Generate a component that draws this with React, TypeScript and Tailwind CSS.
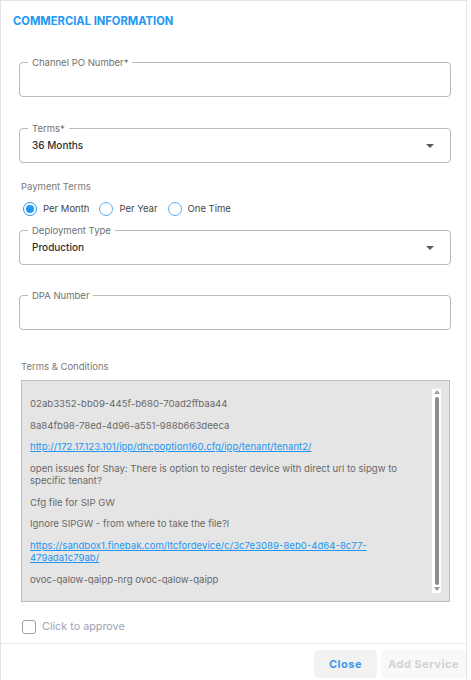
import React from "react";

function OutlinedField({ label, value, select }: { label: string; value?: string; select?: boolean }) {
  return (
    <div className="relative h-[35px] rounded-[4px] border border-[#b9b9b9] flex items-center pl-[12px] pr-[16px]">
      <span className="absolute -top-[7px] left-[8px] bg-white px-[4px] text-[9.5px] leading-[13px] text-[#707070]">
        {label}
      </span>
      {value && <span className="flex-1 text-[10px] font-medium text-[#2f2f2f]">{value}</span>}
      {select && (
        <svg width="8" height="4" viewBox="0 0 8 4" className="ml-auto">
          <path d="M0 0h8L4 4z" fill="#5a5a5a" />
        </svg>
      )}
    </div>
  );
}

function Radio({ label, checked }: { label: string; checked?: boolean }) {
  return (
    <label className="flex items-center gap-[6px]">
      <span
        className={
          checked
            ? "w-[14px] h-[14px] rounded-full border-[1.5px] border-[#2196f3] flex items-center justify-center"
            : "w-[14px] h-[14px] rounded-full border-[1.5px] border-[#5aaef5]"
        }
      >
        {checked && <span className="w-[8px] h-[8px] rounded-full bg-[#2196f3]" />}
      </span>
      <span className="text-[9.5px] text-[#454545]">{label}</span>
    </label>
  );
}

const notes: { text: string; link?: boolean }[] = [
  { text: "02ab3352-bb09-445f-b680-70ad2ffbaa44" },
  { text: "8a84fb98-78ed-4d96-a551-988b663deeca" },
  { text: "http://172.17.123.101/ipp/dhcpoption160.cfg/ipp/tenant/tenant2/", link: true },
  { text: "open issues for Shay: There is option to register device with direct url to sipgw to specific tenant?" },
  { text: "Cfg file for SIP GW" },
  { text: "Ignore SIPGW - from where to take the file?l" },
  { text: "https://sandbox1.finebak.com/ltcfordevice/c/3c7e3089-8eb0-4d64-8c77-479ada1c79ab/", link: true },
  { text: "ovoc-qalow-qaipp-nrg ovoc-qalow-qaipp" },
];

export default function App() {
  return (
    <div className="w-[471px] h-[680px] bg-white overflow-hidden font-['Inter',sans-serif]">
      <div className="w-[467px] h-full border-l border-t border-r border-[#e4e4e4] flex flex-col">
        <div className="pl-[12px] pt-[13px] text-[11.2px] font-bold text-[#2196f3] leading-[14px]">
          COMMERCIAL INFORMATION
        </div>

        <div className="pl-[18px] pr-[15px] pt-[34px] flex flex-col">
          <OutlinedField label="Channel PO Number*" />
          <div className="h-[31px]" />
          <OutlinedField label="Terms*" value="36 Months" select />

          <div className="pl-[2px] pt-[17px] text-[9.5px] leading-[13px] text-[#7a7a7a]">Payment Terms</div>
          <div className="pl-[4px] pt-[9px] flex items-center gap-[10px]">
            <Radio label="Per Month" checked />
            <Radio label="Per Year" />
            <Radio label="One Time" />
          </div>

          <div className="h-[14px]" />
          <OutlinedField label="Deployment Type" value="Production" select />
          <div className="h-[30px]" />
          <OutlinedField label="DPA Number" />

          <div className="pl-[2px] pt-[30px] text-[9.5px] leading-[13px] text-[#7a7a7a]">Terms &amp; Conditions</div>

          <div className="ml-[2px] mr-[1px] mt-[7px] h-[222px] bg-[#e5e5e5] border border-[#bdbdbd] flex">
            <div className="flex-1 pl-[8px] pr-[8px] pt-[17px] flex flex-col gap-[9px] text-[9.6px] leading-[12.5px] text-[#696969]">
              {notes.map((n, i) =>
                n.link ? (
                  <a key={i} className="text-[#2196f3] underline break-words">
                    {n.text}
                  </a>
                ) : (
                  <p key={i}>{n.text}</p>
                )
              )}
            </div>
            <div className="w-[9px] mr-[8px] my-[8px] bg-white flex flex-col items-center">
              <svg width="6" height="5" viewBox="0 0 6 5" className="mt-[1px]">
                <path d="M0 4h6L3 0z" fill="#9a9a9a" />
              </svg>
              <div className="flex-1 w-[4px] my-[2px] rounded-full bg-[#8c8c8c]" />
              <svg width="6" height="5" viewBox="0 0 6 5" className="mb-[1px]">
                <path d="M0 0h6L3 4z" fill="#9a9a9a" />
              </svg>
            </div>
          </div>

          <label className="pl-[3px] pt-[17px] flex items-center gap-[6px]">
            <span className="w-[14px] h-[14px] rounded-[3px] border-[1.5px] border-[#a3a3a3]" />
            <span className="text-[10.8px] text-[#a19fb5]">Click to approve</span>
          </label>
        </div>

        <div className="mt-[8px] border-t border-[#ebebeb] flex justify-end gap-[4px] pt-[6px]">
          <button className="w-[63px] h-[28px] rounded-[4px] bg-[#f2f2f2] text-[11px] font-bold tracking-[0.5px] text-[#3d9be9]">
            Close
          </button>
          <button className="w-[85px] h-[28px] rounded-[4px] bg-[#f8f8f8] text-[11px] font-bold tracking-[0.5px] text-[#d2d2d2]">
            Add Service
          </button>
        </div>
      </div>
    </div>
  );
}
